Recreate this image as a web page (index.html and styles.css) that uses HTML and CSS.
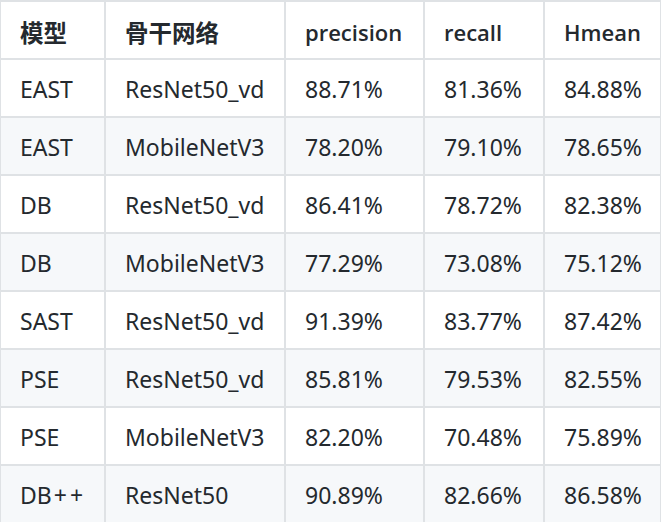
FILE: index.html
```html
<!DOCTYPE html>
<html lang="zh">
<head>
<meta charset="utf-8">
<link rel="stylesheet" href="styles.css">
</head>
<body>
<table class="results">
  <colgroup>
    <col class="c1"><col class="c2"><col class="c3"><col class="c4"><col class="c5">
  </colgroup>
  <thead>
    <tr><th class="cjk">模型</th><th class="cjk">骨干网络</th><th>precision</th><th>recall</th><th>Hmean</th></tr>
  </thead>
  <tbody>
    <tr><td>EAST</td><td>ResNet50_vd</td><td>88.71%</td><td>81.36%</td><td>84.88%</td></tr>
    <tr><td>EAST</td><td>MobileNetV3</td><td>78.20%</td><td>79.10%</td><td>78.65%</td></tr>
    <tr><td>DB</td><td>ResNet50_vd</td><td>86.41%</td><td>78.72%</td><td>82.38%</td></tr>
    <tr><td>DB</td><td>MobileNetV3</td><td>77.29%</td><td>73.08%</td><td>75.12%</td></tr>
    <tr><td>SAST</td><td>ResNet50_vd</td><td>91.39%</td><td>83.77%</td><td>87.42%</td></tr>
    <tr><td>PSE</td><td>ResNet50_vd</td><td>85.81%</td><td>79.53%</td><td>82.55%</td></tr>
    <tr><td>PSE</td><td>MobileNetV3</td><td>82.20%</td><td>70.48%</td><td>75.89%</td></tr>
    <tr><td>DB<span class="wide">++</span></td><td>ResNet50</td><td>90.89%</td><td>82.66%</td><td>86.58%</td></tr>
  </tbody>
</table>
</body>
</html>
```

FILE: styles.css
```css
html, body {
  margin: 0;
  padding: 0;
  background: #ffffff;
}

.results {
  border-collapse: collapse;
  table-layout: fixed;
  width: 661px;
  margin: 0 0 0 -1px;
  font-family: "Noto Sans", "Noto Sans CJK SC", sans-serif;
  font-size: 23px;
  color: #24292e;
}

.c1 { width: 105px; }
.c2 { width: 180px; }
.c3 { width: 139px; }
.c4 { width: 120px; }
.c5 { width: 117px; }

.results th,
.results td {
  border: 2px solid #dfe2e5;
  text-align: left;
  vertical-align: middle;
  white-space: nowrap;
  overflow: hidden;
}

.results th {
  font-family: "Open Sans", "Noto Sans CJK SC", sans-serif;
  font-weight: 600;
  font-size: 22px;
  height: 52px;
  padding: 4px 0 0 19px;
}

.results th.cjk {
  font-family: "Noto Sans CJK SC", sans-serif;
  font-weight: 700;
  font-size: 23.5px;
}

.results td {
  height: 54px;
  padding: 2px 0 0 19px;
}

.results tbody tr:nth-child(even) {
  background: #f6f8fa;
}

.wide {
  letter-spacing: 3px;
  margin-left: 2px;
}
```
